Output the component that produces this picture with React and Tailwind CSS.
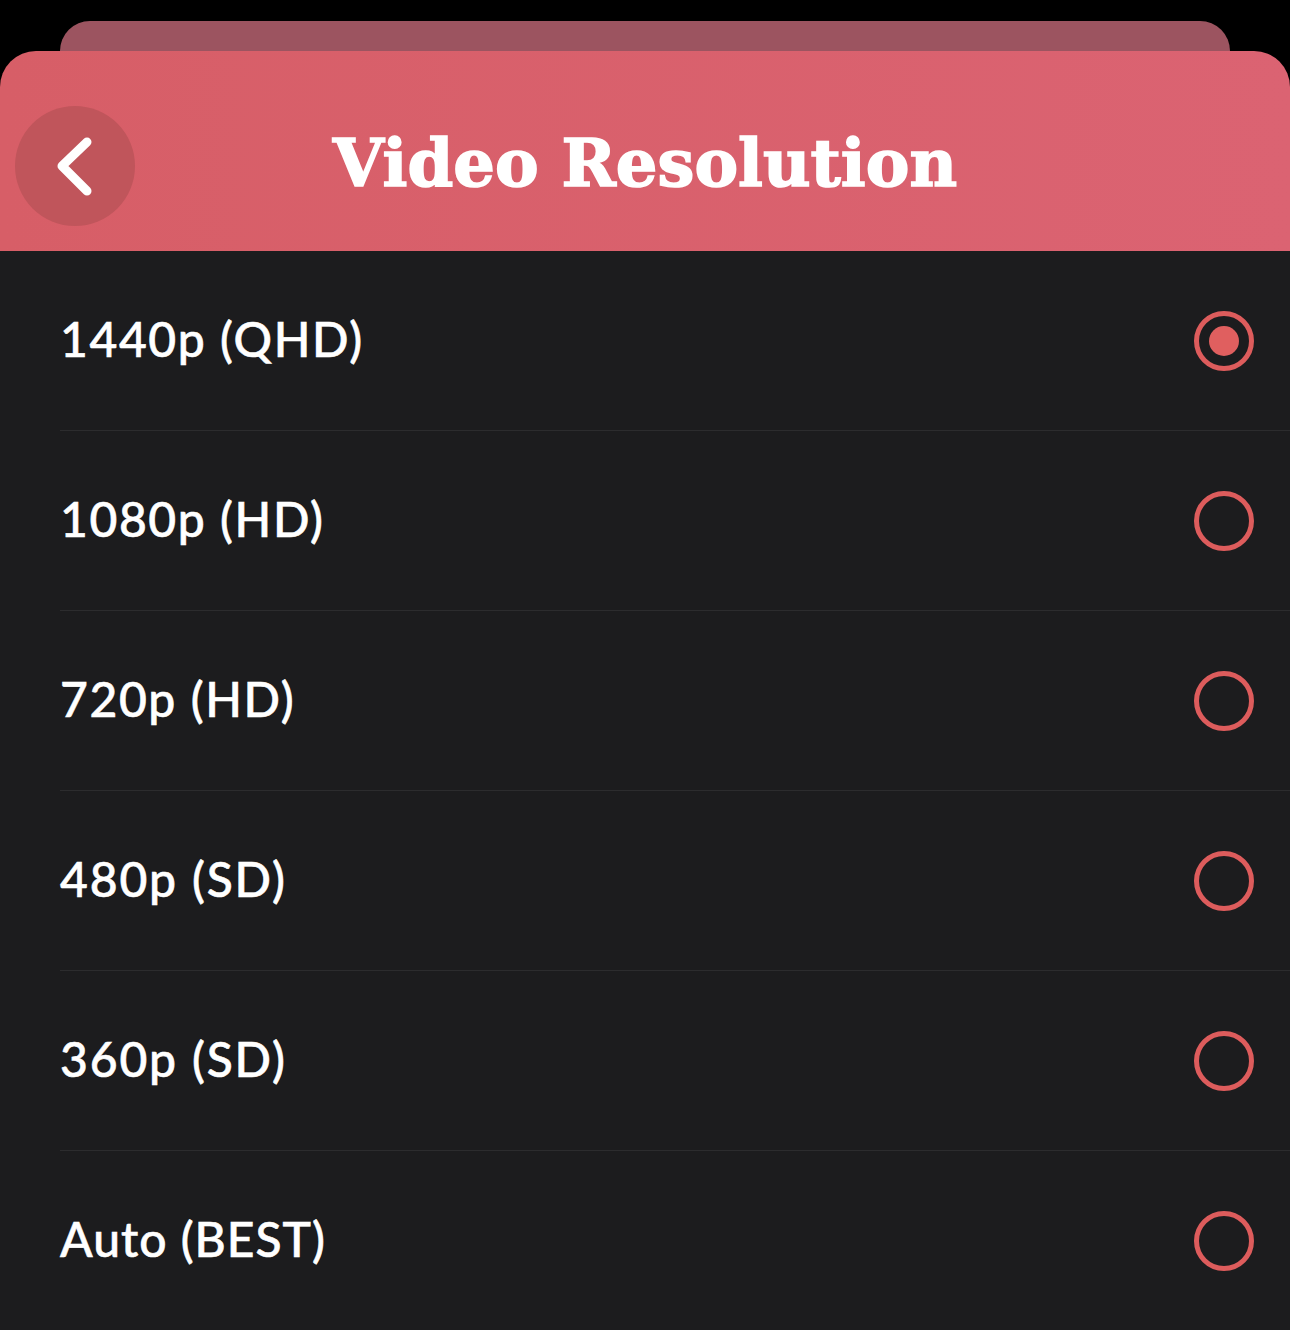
import React from "react"

const rows = [
  ['1440p (QHD)', true, 'tracking-[1.6px]'],
  ['1080p (HD)', false, 'tracking-[1.6px]'],
  ['720p (HD)', false, 'tracking-[1.6px]'],
  ['480p (SD)', false, 'tracking-[1.85px]'],
  ['360p (SD)', false, 'tracking-[1.85px]'],
  ['Auto (BEST)', false, 'tracking-[1px]'],
]

const Radio = ({ on }) => (
  <div className="w-[60px] h-[60px] rounded-full border-[5.5px] border-[#dd5c5c] flex items-center justify-center shrink-0">
    {on && <div className="w-[30px] h-[30px] rounded-full bg-[#e05f5f]" />}
  </div>
)

export default function App() {
  return (
    <div className="w-[1290px] h-[1330px] bg-black overflow-hidden flex flex-col pt-[21px] font-['Lato',sans-serif]">
      <div className="mx-[60px] h-[30px] shrink-0 rounded-t-[30px] bg-[#9c5460]" />

      <div className="h-[200px] shrink-0 rounded-t-[36px] bg-gradient-to-r from-[#d75e67] to-[#db6372] grid grid-cols-[1fr_auto_1fr] items-center pt-[30px] pl-[15px]">
        <button className="w-[120px] h-[120px] rounded-full bg-[#c0555b] flex items-center justify-center">
          <svg width="120" height="120" viewBox="0 0 120 120" fill="none">
            <path d="M72 36 L47 60 L72 85" stroke="white" strokeWidth="9" strokeLinecap="round" strokeLinejoin="round" />
          </svg>
        </button>
        <div className="text-white text-[65.500px] leading-none font-bold font-['DejaVu_Serif',serif] pr-[15px] -mt-[6px] [-webkit-text-stroke:1.6px_white]">Video Resolution</div>
        <div />
      </div>

      <div className="flex-1 bg-[#1c1c1e] pl-[60px]">
        {rows.map((row, i) => (
          <div key={i} className={`h-[180px] flex items-center justify-between pr-[36px] ${i < 5 ? 'border-b border-[#2c2c2e]' : ''}`}>
            <span className={`text-white text-[48px] font-medium -mt-[4px] [-webkit-text-stroke:0.6px_white] ${row[2]}`}>{row[0]}</span>
            <Radio on={row[1]} />
          </div>
        ))}
      </div>
    </div>
  )
}
